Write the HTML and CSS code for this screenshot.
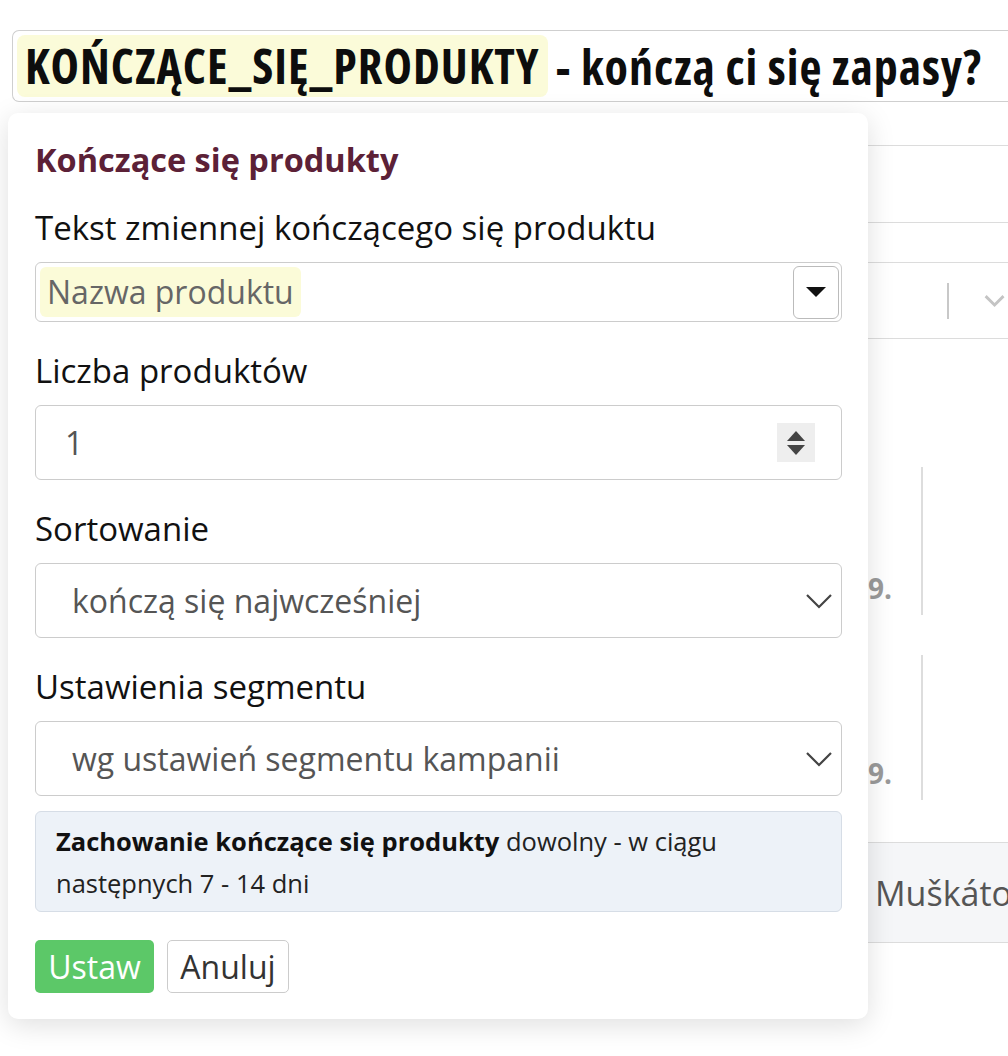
FILE: index.html
```html
<!DOCTYPE html>
<html>
<head>
    <title>Kończące się produkty</title>
    <link rel="stylesheet" href="styles.css">
</head>
<body>
<div class="page">
    <div class="title-field"><span class="var-tag">KOŃCZĄCE_SIĘ_PRODUKTY</span> - kończą ci się zapasy?</div>

    <div class="sheet">
        <div class="row row-a"></div>
        <div class="row row-b"></div>
        <div class="row row-c">
            <span class="sep"></span>
            <svg class="row-chevron" width="30" height="20" viewBox="0 0 30 20"><path d="M2 4 L13 15 L24 4" fill="none" stroke="#c4c4c4" stroke-width="3.5"/></svg>
        </div>
        <div class="row row-gap"></div>
        <div class="row row-year year-first"><span class="year">9.</span><span class="vline"></span></div>
        <div class="row row-year year-second"><span class="year">9.</span><span class="vline"></span></div>
        <div class="row row-name">Muškáto</div>
    </div>
</div>

<div class="popup">
    <h2 class="popup-title">Kończące się produkty</h2>

    <div class="field">
        <div class="field-label">Tekst zmiennej kończącego się produktu</div>
        <div class="combo">
            <span class="combo-value">Nazwa produktu</span>
            <span class="combo-btn">
                <svg width="20" height="10" viewBox="0 0 20 10"><path d="M0 0 L20 0 L10 10 Z" fill="#111"/></svg>
            </span>
        </div>
    </div>

    <div class="field">
        <div class="field-label">Liczba produktów</div>
        <div class="input">
            <span class="input-value">1</span>
            <span class="spinner">
                <svg width="20" height="30" viewBox="0 0 20 30"><path d="M10 3 L19 13 L1 13 Z" fill="#444"/><path d="M1 17 L19 17 L10 27 Z" fill="#444"/></svg>
            </span>
        </div>
    </div>

    <div class="field">
        <div class="field-label">Sortowanie</div>
        <div class="select">
            <span class="select-value">kończą się najwcześniej</span>
            <svg class="chevron" width="26" height="16" viewBox="0 0 26 16"><path d="M1 2 L13 14 L25 2" fill="none" stroke="#444" stroke-width="2.2"/></svg>
        </div>
    </div>

    <div class="field field-last">
        <div class="field-label">Ustawienia segmentu</div>
        <div class="select">
            <span class="select-value">wg ustawień segmentu kampanii</span>
            <svg class="chevron" width="26" height="16" viewBox="0 0 26 16"><path d="M1 2 L13 14 L25 2" fill="none" stroke="#444" stroke-width="2.2"/></svg>
        </div>
    </div>

    <div class="info">
        <strong>Zachowanie kończące się produkty</strong> dowolny - w ciągu<br>
        następnych 7 - 14 dni
    </div>

    <div class="actions">
        <button class="btn btn-primary">Ustaw</button>
        <button class="btn btn-default">Anuluj</button>
    </div>
</div>
</body>
</html>
```

FILE: styles.css
```css
body {
    margin: 0;
    padding: 0;
    background-color: #ffffff;
    font-family: "Open Sans", "Noto Sans", sans-serif;
    color: #111111;
    overflow: hidden;
    width: 1008px;
    height: 1056px;
    position: relative;
}
.page {
    padding-top: 30px;
}
.title-field {
    margin-left: 12px;
    height: 72px;
    box-sizing: border-box;
    border: 1.5px solid #cfcfcf;
    border-right: none;
    border-radius: 7px 0 0 7px;
    display: flex;
    align-items: center;
    padding-left: 4px;
    font-size: 48px;
    font-weight: 700;
    font-stretch: 87.5%;
    white-space: nowrap;
    overflow: hidden;
    color: #0d0d0d;
    letter-spacing: 1px;
}
.var-tag {
    background-color: #fbfbd9;
    border-radius: 8px;
    height: 62px;
    line-height: 62px;
    padding: 0 8px;
    margin-right: 8px;
}
.sheet {
    margin-top: 43px;
    margin-left: 860px;
}
.row {
    border-top: 1.5px solid #dcdcdc;
    box-sizing: border-box;
    display: flex;
    align-items: center;
}
.row-a {
    height: 77px;
}
.row-b {
    height: 40px;
}
.row-c {
    height: 76px;
}
.sep {
    width: 2px;
    height: 36px;
    background-color: #c8c8c8;
    margin-left: 87px;
}
.row-chevron {
    margin-left: 35px;
}
.row-gap {
    height: 122px;
}
.row-year {
    height: 175px;
    border-top: none;
    align-items: stretch;
}
.year {
    width: 53px;
    padding-left: 8px;
    font-size: 28px;
    line-height: 38px;
    font-weight: 700;
    color: #9a9a9a;
}
.year-first .year {
    padding-top: 109px;
}
.year-second .year {
    padding-top: 119px;
}
.vline {
    width: 1.5px;
    background-color: #dddddd;
}
.year-first .vline {
    margin: 7px 0 20px 0;
}
.year-second .vline {
    margin: 20px 0 10px 0;
}
.row-name {
    margin-top: 32px;
    height: 101px;
    background-color: #f5f6f8;
    border-bottom: 1.5px solid #dcdcdc;
    padding-left: 15px;
    font-size: 34px;
    color: #555555;
    white-space: nowrap;
    overflow: hidden;
}
.popup {
    position: absolute;
    left: 8px;
    top: 113px;
    width: 860px;
    box-sizing: border-box;
    padding: 27px 26px 26px 27px;
    background-color: #ffffff;
    border-radius: 10px;
    box-shadow: 0 6px 28px rgba(0, 0, 0, 0.13);
}
.popup-title {
    margin: 0 0 28px 0;
    font-size: 32.5px;
    line-height: 40px;
    font-weight: 700;
    color: #5c2137;
}
.field {
    margin-bottom: 29px;
}
.field-last {
    margin-bottom: 15px;
}
.field-label {
    font-size: 33px;
    line-height: 40px;
    margin-bottom: 14px;
    color: #111111;
}
.combo, .input, .select {
    box-sizing: border-box;
    border: 1.5px solid #cccccc;
    border-radius: 6px;
    display: flex;
    align-items: center;
    font-size: 32px;
    color: #555555;
}
.combo {
    height: 60px;
    padding: 0 2px 0 4px;
}
.combo-value {
    background-color: #fbfbd8;
    border-radius: 6px;
    height: 50px;
    line-height: 50px;
    padding: 0 7px;
    color: #666666;
}
.combo-btn {
    margin-left: auto;
    width: 46px;
    height: 53px;
    box-sizing: border-box;
    border: 1.5px solid #bbbbbb;
    border-radius: 6px;
    display: flex;
    align-items: center;
    justify-content: center;
}
.input {
    height: 75px;
    padding: 0 26px 0 29px;
}
.spinner {
    margin-left: auto;
    width: 38px;
    height: 39px;
    background-color: #eeeeee;
    display: flex;
    align-items: center;
    justify-content: center;
}
.select {
    height: 75px;
    padding: 0 9px 0 36px;
}
.chevron {
    margin-left: auto;
}
.info {
    background-color: #edf2f8;
    border: 1.5px solid #d6dde6;
    border-radius: 6px;
    padding: 8px 20px 7px 20px;
    font-size: 25.5px;
    line-height: 42px;
    color: #222222;
}
.info strong {
    color: #111111;
}
.actions {
    margin-top: 28px;
    display: flex;
    gap: 13px;
}
.btn {
    font-family: "Open Sans", "Noto Sans", sans-serif;
    font-size: 32px;
    height: 53px;
    border-radius: 5px;
    padding: 0 10px;
    cursor: pointer;
}
.btn-primary {
    width: 119px;
    background-color: #5cc868;
    border: none;
    color: #ffffff;
}
.btn-default {
    width: 122px;
    background-color: #ffffff;
    border: 1.5px solid #cccccc;
    color: #333333;
}
```
